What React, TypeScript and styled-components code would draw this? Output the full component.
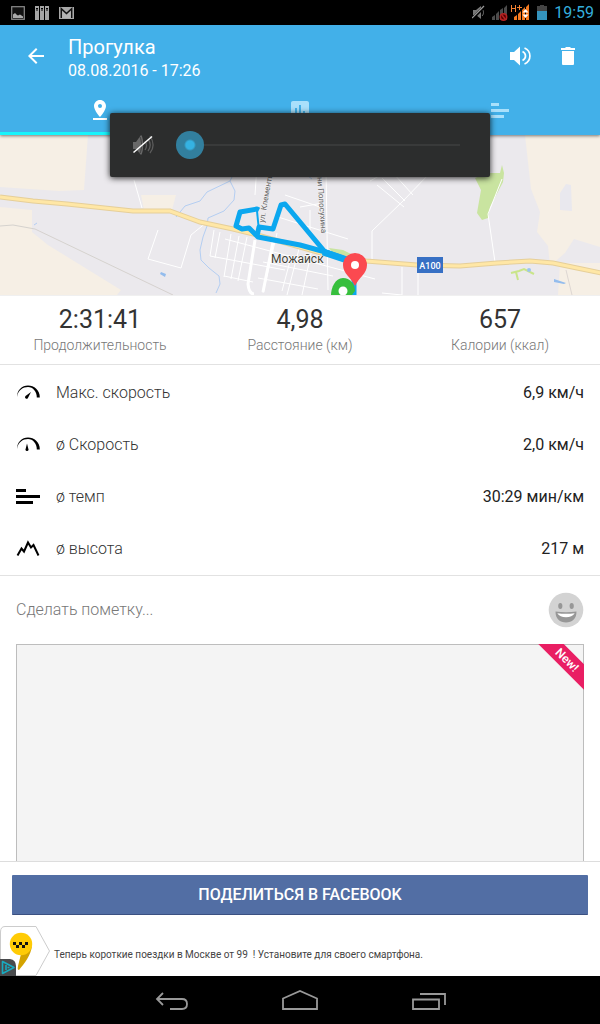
import React, { useState } from "react";
import styled, { createGlobalStyle } from "styled-components";
import { MdArrowBack, MdPinDrop, MdInsertChart } from "react-icons/md";

const GlobalStyle = createGlobalStyle`
  *, *::before, *::after { box-sizing: border-box; }
  body {
    margin: 0;
    background: #fff;
    color: #333;
    font-family: Roboto, "Noto Sans", sans-serif;
    font-size: 16px;
  }
  h1, p, dl, dt, dd { margin: 0; font-weight: 400; }
  button { border: 0; padding: 0; background: none; color: inherit; font: inherit; cursor: pointer; }
  svg { display: block; }
`;

const Screen = styled.div`
  position: relative;
  display: flex;
  flex-direction: column;
  min-height: 100vh;
`;

const StatusBar = styled.div`
  display: flex;
  align-items: center;
  justify-content: space-between;
  height: 25px;
  padding: 0 6px 0 11px;
  background: #000;
`;

const StatusGroup = styled.div<{ $gap: number }>`
  display: flex;
  align-items: center;
  gap: ${(p) => p.$gap}px;
`;

const Clock = styled.span`
  color: #35aedc;
  font-size: 16px;
  line-height: 24px;
`;

const Header = styled.header`
  position: relative;
  z-index: 1;
  background: #42b0e9;
  color: #fff;
  box-shadow: 0 1px 3px rgba(0, 0, 0, 0.5);
`;

const Toolbar = styled.div`
  display: flex;
  align-items: center;
  height: 62px;
  padding: 0 8px 0 12px;
`;

const IconButton = styled.button`
  display: grid;
  place-items: center;
  width: 48px;
  height: 48px;
`;

const Titles = styled.div`
  flex: 1;
  padding: 5px 8px 0;
`;

const Title = styled.h1`
  font-size: 20px;
  line-height: 24px;
`;

const Subtitle = styled.p`
  font-size: 16px;
  line-height: 24px;
`;

const Tabs = styled.div`
  display: flex;
  height: 48px;
`;

const Tab = styled.button<{ $active?: boolean }>`
  display: grid;
  flex: 1;
  place-items: center;
  border-bottom: 3px solid ${(p) => (p.$active ? "#18f4fb" : "transparent")};
  color: ${(p) => (p.$active ? "#fff" : "#a9e0fb")};
`;

const VolumePanel = styled.div`
  position: absolute;
  z-index: 2;
  top: 113px;
  left: 16px;
  right: 16px;
  display: flex;
  align-items: center;
  gap: 20px;
  max-width: 380px;
  height: 64px;
  margin: 0 auto;
  padding: 0 16px 0 22px;
  border-radius: 2px;
  background: #2c2d2d;
  box-shadow: 0 1px 6px rgba(0, 0, 0, 0.85);
`;

const VolumeSlider = styled.input`
  flex: 1;
  min-width: 0;
  height: 30px;
  margin: 0;
  appearance: none;
  background: linear-gradient(#393a3a, #393a3a) center / calc(100% - 28px) 2px no-repeat;

  &::-webkit-slider-thumb {
    width: 28px;
    height: 28px;
    appearance: none;
    border: 0;
    border-radius: 50%;
    background: radial-gradient(circle, #35b2e2 4px, #327f9e 6px);
  }
`;

const MapView = styled.svg`
  width: 100%;
  height: 160px;
  background: #ebe9ed;
`;

const Stats = styled.dl`
  display: grid;
  grid-template-columns: repeat(3, 1fr);
  padding: 8px 0 10px;
  border-top: 1px solid #f0f0f0;
  border-bottom: 1px solid #e2e2e2;
  text-align: center;
`;

const Stat = styled.div`
  display: flex;
  flex-direction: column-reverse;
`;

const StatValue = styled.dd`
  font-size: 25px;
  line-height: 32px;
`;

const StatLabel = styled.dt`
  color: #777;
  font-size: 14px;
  font-weight: 300;
  line-height: 18px;
`;

const Metrics = styled.dl`
  padding: 2px 0 0;
  border-bottom: 1px solid #e2e2e2;
`;

const Metric = styled.div`
  display: grid;
  grid-template-columns: 24px 1fr auto;
  align-items: center;
  gap: 16px;
  padding: 14px 16px;
  line-height: 24px;
`;

const MetricLabel = styled.dt`
  font-weight: 300;
`;

const MetricValue = styled.dd`
  color: #222;
`;

const NoteRow = styled.div`
  display: flex;
  align-items: center;
  height: 68px;
  padding: 0 16px;
`;

const NoteInput = styled.input`
  flex: 1;
  min-width: 0;
  padding: 0;
  border: 0;
  outline: 0;
  background: none;
  color: #333;
  font: inherit;
  font-weight: 300;
  line-height: 24px;

  &::placeholder { color: #777; opacity: 1; }
`;

const PhotoArea = styled.div`
  position: relative;
  flex: 1;
  min-height: 120px;
  margin: 0 16px;
  overflow: hidden;
  background: #f4f4f4;
  box-shadow: inset 1px 1px #bdbdbd, inset -1px 0 #bdbdbd;
`;

const Ribbon = styled.span`
  position: absolute;
  top: 7px;
  right: -33px;
  width: 100px;
  background: #e91e63;
  color: #fff;
  font-size: 12px;
  font-weight: 500;
  line-height: 18px;
  text-align: center;
  transform: rotate(45deg);
`;

const ShareBar = styled.div`
  padding: 13px 12px 11px;
  border-top: 1px solid #ddd;
`;

const ShareButton = styled.button`
  display: block;
  width: 100%;
  height: 40px;
  border-bottom: 1px solid #3b5081;
  border-radius: 1px;
  background: #526ea4;
  color: #fff;
  font-weight: 500;
`;

const Ad = styled.a`
  display: flex;
  align-items: center;
  gap: 4px;
  height: 50px;
  color: #444;
  font-size: 10px;
  line-height: 16px;
  text-decoration: none;
`;

const AdText = styled.span`
  padding-top: 7px;
  white-space: pre-wrap;
`;

const NavBar = styled.nav`
  display: flex;
  justify-content: center;
  gap: 80px;
  height: 48px;
  background: #000;
`;

const PictureIcon = () => (
  <svg width="14" height="14" viewBox="0 0 14 14">
    <rect x=".7" y=".7" width="12.6" height="12.6" fill="#111" stroke="#8c8c8c" strokeWidth="1.2" />
    <path d="M2 12V8.500l2-1.500 2 2 1 .5 2-1 3 2v1.500z" fill="#aaa" />
  </svg>
);

const BindersIcon = () => (
  <svg width="14" height="14" viewBox="0 0 14 14">
    {[0, 5, 10].map((x) => (
      <g key={x}>
        <path d={`M${x} 0h4v14h-4z`} fill="#a6a6a6" />
        <path d={`M${x + 1} 2h2v1h-.5v2h-1V3H${x + 1}z`} fill="#000" />
      </g>
    ))}
  </svg>
);

const MailIcon = () => (
  <svg width="15" height="12" viewBox="0 0 15 12">
    <path d="M0 0h15v12H0z" fill="#a8a8a8" />
    <path d="M2.300 11V1.800l5.200 4.800 5.200-4.800V11" fill="none" stroke="#111" strokeWidth="1.500" />
    <path d="M3.200 4.300l4.300 4 4.300-4V11H3.200z" fill="#b5b5b5" />
  </svg>
);

const MutedIcon = () => (
  <svg width="13" height="15" viewBox="0 0 13 15">
    <path d="M1 5h3l5-4v13l-5-4H1z" fill="#777" />
    <path d="M10 4c2 2 2 5 0 7" fill="none" stroke="#777" />
    <path d="M1 13L12 2" stroke="#000" strokeWidth="3" />
    <path d="M0 13L12 1" stroke="#999" strokeWidth="1.2" />
  </svg>
);

const NoSignalIcon = () => (
  <svg width="16" height="16" viewBox="0 0 16 16">
    <path d="M0 15v-3l3-2v5zM4 15V9l3-3v9zM8 15V5l3-2v12zM12 15V3l3-3v15z" fill="#4b4b4b" />
    <circle cx="11.500" cy="12" r="3.200" fill="#500" stroke="#b62222" strokeWidth="1.500" />
    <path d="M10 10l3 4" stroke="#b62222" strokeWidth="1.500" />
  </svg>
);

const DataSignalIcon = () => (
  <svg width="20" height="18" viewBox="0 0 20 18">
    <path d="M1.500 1v7M5.500 1v7M1.500 4.500h4M7 3.500h5M9.500 1v5" stroke="#f58231" fill="none" />
    <path d="M4 16v-3l3-2v5zM8 16v-6l3-3v9zM12 16V6l3-3v13zM16 16V3l3-3v16z" fill="#f47a20" />
    <path d="M12.500 8.500L15.500 5l3 3.500zM12.500 10.500l3 3.500 3-3.500z" fill="#fff" />
  </svg>
);

const BatteryIcon = () => (
  <svg width="10" height="15" viewBox="0 0 10 15">
    <path d="M3 0h4v1h3v6H0V1h3z" fill="#444" />
    <path d="M0 6h10v9H0z" fill="#3493bd" />
  </svg>
);

const SpeakerIcon = () => (
  <svg width="24" height="24" viewBox="0 0 24 24">
    <path d="M2 8h4l6-5.500v19L6 16H2z" fill="#fff" />
    <path d="M14.500 7.500c4 2 4 7 0 9M16.500 4c7.200 3 7.200 13 0 16" fill="none" stroke="#fff" strokeWidth="1.700" />
  </svg>
);

const TrashIcon = () => (
  <svg width="24" height="24" viewBox="0 0 24 24" fill="#fff">
    <path d="M5 4h4l1-1h4l1 1h4v2H5zM6 7h12v13a1 1 0 0 1-1 1H7a1 1 0 0 1-1-1z" />
  </svg>
);

const PaceIcon = () => (
  <svg width="24" height="24" viewBox="0 0 24 24" fill="#000">
    <path d="M0 4h10v3H0zM0 10h24v3H0zM0 16h17v3H0z" />
  </svg>
);

const SplitsIcon = () => (
  <svg width="18" height="19" viewBox="0 0 18 19" fill="currentColor">
    <path d="M0 3h8v3H0zM0 9h18v3H0zM0 15h13v3H0z" />
  </svg>
);

const VolumeOffIcon = () => (
  <svg width="24" height="24" viewBox="0 0 24 24">
    <path d="M1 9h3l5-7c3 2 3 18 0 20l-5-6H1z" fill="#686868" />
    <path d="M8 4c2 4 2 12 0 16" stroke="#3d3d3d" fill="none" />
    <path d="M13 8c2 3 2 6 0 9M16 6c3 4 3 8 0 12M18 3c4 6 4 12 0 17" stroke="#5c5c5c" strokeWidth="1.300" fill="none" />
    <path d="M1.500 19.500L20 3.500" stroke="#fff" strokeWidth="1.500" />
  </svg>
);

const GaugeIcon = ({ fast }: { fast?: boolean }) => (
  <svg width="24" height="24" viewBox="0 0 24 24">
    <path d="M1 16C1 9 6 4.500 12 4.500S24 9 23.800 16.500h-3C21 11 17 6 12 6S2 9 1 16z" fill="#000" />
    {fast ? <path d="M15 11l-5.500 4a1.600 1.600 0 0 0 2.300 2.300z" fill="#000" /> : <path d="M11 10.500l-1.500 6a1.500 1.500 0 0 0 3 0z" fill="#000" />}
  </svg>
);

const PeaksIcon = () => (
  <svg width="24" height="24" viewBox="0 0 24 24">
    <path d="M1.500 18.500L5.500 11.500l2.500 3 4-9 3 5 2.500-2.500 5 10.500" fill="none" stroke="#000" strokeWidth="2" />
  </svg>
);

const SmileyIcon = () => (
  <svg width="36" height="36" viewBox="0 0 36 36">
    <circle cx="18" cy="18" r="17.300" fill="#d3d3d3" />
    <ellipse cx="12.300" cy="14" rx="2.100" ry="3" fill="#979797" />
    <ellipse cx="23.700" cy="14" rx="2.100" ry="3" fill="#979797" />
    <path d="M7.500 19.500Q18 21 28.500 19.500C28.500 27 24 30.500 18 30.500S7.500 27 7.500 19.500z" fill="#979797" />
    <path d="M9.300 21.200Q18 22.500 26.700 21.200C25 24 22 25.300 18 25.300S11 24 9.300 21.200z" fill="#fff" />
  </svg>
);

const TaxiLogo = () => (
  <svg width="50" height="50" viewBox="0 0 50 50">
    <path d="M5 .5h31L49.500 25 36 49.500H5Q.5 49.500.5 44V6Q.5.500 5 .5z" fill="#fff" stroke="#ccc" />
    <path d="M21 28l11-8c-1 9-8 18-13 24-2 0-1-3-1-4z" fill="#d4a300" />
    <circle cx="21" cy="18" r="11.200" fill="#ffcb05" />
    <path d="M13 16h3v3h-3zM19 16h3v3h-3zM25 16h3v3h-3zM16 19h3v3h-3zM22 19h3v3h-3z" fill="#111" />
    <path d="M0 33h10q6 1 6 7v10H0z" fill="#494b4d" />
    <path d="M2.500 35.500v12L14 41.500zM6 39v5M7.500 41.500h2" fill="none" stroke="#18abc0" strokeWidth="1.600" strokeLinejoin="round" />
  </svg>
);

const BackKey = () => (
  <svg width="48" height="48" viewBox="0 0 48 48" fill="none" stroke="#999" strokeWidth="1.800">
    <path d="M15 17l-6 6 6 6M9.500 23H34q5 0 5 5t-5 5H22" />
  </svg>
);

const HomeKey = () => (
  <svg width="48" height="48" viewBox="0 0 48 48" fill="none" stroke="#999" strokeWidth="1.800">
    <path d="M7 33V22.500L24 15l17 7.500V33z" />
  </svg>
);

const RecentKey = () => (
  <svg width="48" height="48" viewBox="0 0 48 48" fill="none" stroke="#999" strokeWidth="1.800">
    <path d="M9 23.500h26V33H9zM16 18h25v11" />
  </svg>
);

const HIGHWAY = "M0 62l33 4 34 3 66 7h37l30 11 33 7 28 7 60 17 45 8 51 4 43 1 37-3 33-2 23 2 24 5 24 5";

const RouteMap = () => (
  <MapView viewBox="0 0 600 160" preserveAspectRatio="xMidYMid slice" role="img" aria-label="Карта маршрута">
    <g fill="#f6efe5">
      <path d="M0 0h88l-4 55-25 1L0 52zM0 72l32 3v22l16 13 73 45-4 5H0zM141 60h35l-4 15h-28z" />
      <path d="M525 0h75v112l-26-8-9 14-15 13-2-20-11-14 3-20-9-23zM600 128v32h-42l2-32z" />
    </g>
    <path d="M560 58l6-9 5 1 1 26-12-1z" fill="#e9e8ee" />
    <g fill="#c9e4a0">
      <path d="M475 43L487 38 500 38 502 30 504 38 503 47 490 72 488 83 482 85 477 78 481 55z" />
      <path d="M329 113l14 2 12 6 3 9-20-5z" />
    </g>
    <g fill="none" stroke="#fff" strokeWidth="1">
      <path d="M134 45l8 28M158 95l-10 29 33 9 10-33 16-13M214 95l-4 26M210 121l75 14M220 97l-5 26M231 99l-7 43M239 101l-8 43M247 102l-9 44M224 141l29 6M225 104l150 40M257 30l-2 30M277 98l-14 60M285 60l35 12M278 82l70 22M290 126l-8 30M300 110l-13 50M312 114l-10 46M263 127l70 14M258 143l60 11" />
      <path d="M326 35l2 120M300 72l23-4M310 75v20M377 50l27 22M382 43l23 23M393 38l20 22M370 46l18-10M429 39l-26 27-31 30v30M402 132v28l-20-2M502 44l-14 35 7 48M418 136v24" />
      <path d="M255 105l-7 44q1 10 6 10M273 107l-10 50" strokeWidth="3" />
    </g>
    <g fill="none" stroke="#b4cef2" strokeWidth="1">
      <path d="M235 36l-5 10-23 11-7 9-15 5-9 11M230 46l5 10-1 9-10 11-16 7-1 8-4 11-3 13 1 10 8 8 10 8 1 8-4 9M300 35l12 9M34 90l3-2" />
    </g>
    <path d="M161 137l5 2-1 3-5-3zM554 144l12 4-2 1-10-2z" fill="#93bced" />
    <path d="M0 91l13-1 22 4 138 66" fill="none" stroke="#d5d2ce" />
    <path d="M566 135l6 25" stroke="#ddd6d2" />
    <path d="M511 138l8-2 5-2 10 5M516 137l2 8" fill="none" stroke="#c9e58a" strokeWidth="2" />
    <circle cx="529" cy="135" r="2" fill="#9cc4ef" />
    <g fill="none">
      <path d={HIGHWAY} stroke="#e6cf99" strokeWidth="5" />
      <path d={HIGHWAY} stroke="#ffe7a6" strokeWidth="3" />
    </g>
    <g fill="#666" fontSize="8" stroke="#f4f3f5" strokeWidth="1" paintOrder="stroke">
      <text transform="translate(264 88) rotate(-80)">ул. Клементьевская</text>
      <text transform="translate(317 38) rotate(86)">ени Полосухина</text>
    </g>
    <text x="271" y="128" fill="#413f36" stroke="#fff" strokeWidth="1" paintOrder="stroke" fontSize="12">Можайск</text>
    <g fill="none" stroke="#0ba7ef" strokeWidth="5" strokeLinejoin="round">
      <path d="M259 75l-2-1-17 3-4 14 6 3 7-1 9 9 42 8 29 8 25 9v34" />
      <path d="M257 101l2-9 14 2 8-24 4-1 40 48" />
      <path d="M257 76l2 20" strokeWidth="2" />
      <path d="M323 117l27 9" strokeWidth="7" />
    </g>
    <path d="M331 160c0-7 4-17 12-17 7 0 12 6 12 13l-3 4z" fill="#37bf3d" />
    <circle cx="343" cy="156" r="4.500" fill="#fff" />
    <path d="M355 151c-4-9-12-12-12-21a12 12 0 0 1 24 0c0 9-8 12-12 21z" fill="#fb4950" />
    <circle cx="355" cy="130" r="4" fill="#fff" />
    <path d="M417 122h26v16h-26z" fill="#3770c4" />
    <text x="430" y="134" fill="#fff" fontSize="9" fontWeight="500" textAnchor="middle">A100</text>
  </MapView>
);

const stats = [
  { label: "Продолжительность", value: "2:31:41" },
  { label: "Расстояние (км)", value: "4,98" },
  { label: "Калории (ккал)", value: "657" },
];

const metrics = [
  { icon: <GaugeIcon fast />, label: "Макс. скорость", value: "6,9 км/ч" },
  { icon: <GaugeIcon />, label: "ø Скорость", value: "2,0 км/ч" },
  { icon: <PaceIcon />, label: "ø темп", value: "30:29 мин/км" },
  { icon: <PeaksIcon />, label: "ø высота", value: "217 м" },
];

export default function App() {
  const [volume, setVolume] = useState(0);
  const [note, setNote] = useState("");

  return (
    <>
      <GlobalStyle />
      <Screen>
        <StatusBar>
          <StatusGroup $gap={10}>
            <PictureIcon />
            <BindersIcon />
            <MailIcon />
          </StatusGroup>
          <StatusGroup $gap={7}>
            <MutedIcon />
            <StatusGroup $gap={2}>
              <NoSignalIcon />
              <DataSignalIcon />
            </StatusGroup>
            <BatteryIcon />
            <Clock>19:59</Clock>
          </StatusGroup>
        </StatusBar>

        <Header>
          <Toolbar>
            <IconButton aria-label="Назад"><MdArrowBack size={24} /></IconButton>
            <Titles>
              <Title>Прогулка</Title>
              <Subtitle>08.08.2016 - 17:26</Subtitle>
            </Titles>
            <IconButton aria-label="Звук"><SpeakerIcon /></IconButton>
            <IconButton aria-label="Удалить"><TrashIcon /></IconButton>
          </Toolbar>
          <Tabs role="tablist">
            <Tab role="tab" aria-selected="true" aria-label="Карта" $active><MdPinDrop size={24} /></Tab>
            <Tab role="tab" aria-selected="false" aria-label="Графики"><MdInsertChart size={24} /></Tab>
            <Tab role="tab" aria-selected="false" aria-label="Отрезки"><SplitsIcon /></Tab>
          </Tabs>
        </Header>

        <VolumePanel>
          <VolumeOffIcon />
          <VolumeSlider
            type="range"
            min={0}
            max={15}
            value={volume}
            aria-label="Громкость"
            onChange={(e) => setVolume(Number(e.target.value))}
          />
        </VolumePanel>

        <RouteMap />

        <Stats>
          {stats.map((s) => (
            <Stat key={s.label}>
              <StatLabel>{s.label}</StatLabel>
              <StatValue>{s.value}</StatValue>
            </Stat>
          ))}
        </Stats>

        <Metrics>
          {metrics.map((m) => (
            <Metric key={m.label}>
              {m.icon}
              <MetricLabel>{m.label}</MetricLabel>
              <MetricValue>{m.value}</MetricValue>
            </Metric>
          ))}
        </Metrics>

        <NoteRow>
          <NoteInput
            aria-label="Пометка"
            placeholder="Сделать пометку..."
            value={note}
            onChange={(e) => setNote(e.target.value)}
          />
          <button aria-label="Настроение"><SmileyIcon /></button>
        </NoteRow>

        <PhotoArea>
          <Ribbon>New!</Ribbon>
        </PhotoArea>

        <ShareBar>
          <ShareButton>ПОДЕЛИТЬСЯ В FACEBOOK</ShareButton>
        </ShareBar>

        <Ad href="#">
          <TaxiLogo />
          <AdText>{"Теперь короткие поездки в Москве от 99  ! Установите для своего смартфона."}</AdText>
        </Ad>

        <NavBar>
          <IconButton aria-label="Назад"><BackKey /></IconButton>
          <IconButton aria-label="Домой"><HomeKey /></IconButton>
          <IconButton aria-label="Недавние"><RecentKey /></IconButton>
        </NavBar>
      </Screen>
    </>
  );
}
